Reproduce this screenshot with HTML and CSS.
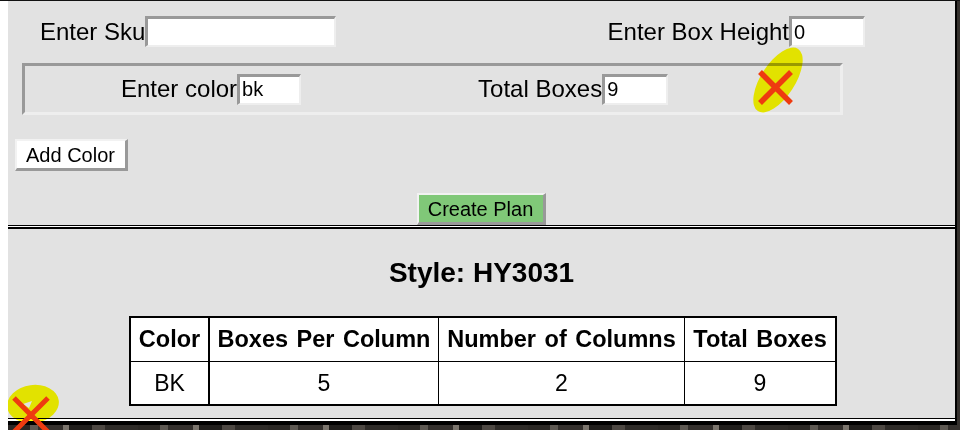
FILE: index.html
```html
<!DOCTYPE html>
<html>
<head>
<meta charset="utf-8">
<title>Plan</title>
<link rel="stylesheet" href="styles.css">
</head>
<body>
<div class="frame">
  <div class="panel">
    <section class="form">
      <div class="row-top">
        <label class="field"><span class="lbl">Enter Sku</span><input class="in in-sku" type="text" value=""></label>
        <label class="field"><span class="lbl">Enter Box Height</span><input class="in in-height" type="text" value="0"></label>
      </div>
      <div class="color-box">
        <label class="field"><span class="lbl">Enter color</span><input class="in in-color" type="text" value="bk"></label>
        <label class="field f-total"><span class="lbl">Total Boxes</span><input class="in in-total" type="text" value="9"></label>
        <div class="mark mark-row">
          <svg class="blob" width="56" height="69" viewBox="0 0 56 69"><ellipse cx="28" cy="35" rx="37" ry="17" transform="rotate(-57 28 35)" fill="#ffff00"/></svg>
          <svg class="cross" width="56" height="69" viewBox="0 0 56 69"><path d="M10 27 L41 58 M41 27 L10 58" stroke="#ee3b10" stroke-width="5.5" fill="none"/></svg>
        </div>
      </div>
      <button class="btn btn-add" type="button">Add Color</button>
      <div class="plan-wrap"><button class="btn btn-plan" type="button">Create Plan</button></div>
    </section>
    <div class="gap"></div>
    <section class="result">
      <h2 class="title">Style: HY3031</h2>
      <table class="plan">
        <thead>
          <tr><th>Color</th><th>Boxes Per Column</th><th>Number of Columns</th><th>Total Boxes</th></tr>
        </thead>
        <tbody>
          <tr><td>BK</td><td>5</td><td>2</td><td>9</td></tr>
        </tbody>
      </table>
    </section>
    <div class="foot"></div>
  </div>
  <div class="mark mark-corner">
    <svg class="blob" width="60" height="60" viewBox="0 0 60 60"><ellipse cx="29" cy="23" rx="26" ry="19" transform="rotate(-8 29 23)" fill="#ffff00"/><polygon points="19,23 28,20 25,27" fill="#ffffff"/></svg>
    <svg class="cross" width="60" height="60" viewBox="0 0 60 60"><path d="M10 17 L45 52 M44 17 L9 52" stroke="#ee3b10" stroke-width="5" fill="none"/></svg>
  </div>
</div>
</body>
</html>
```

FILE: styles.css
```css
html, body {
  margin: 0;
  padding: 0;
}

body {
  background: #fff;
  border-top: 1px solid #111;
  font-family: "Liberation Sans", Arial, sans-serif;
  color: #000;
}

.frame {
  position: relative;
  margin-left: 8px;
  width: 952px;
  height: 429px;
  overflow: hidden;
  background-color: #262422;
  background-image: repeating-linear-gradient(90deg,
    #2a2724 0 22px, #5e5953 22px 30px, #34302d 30px 55px,
    #7a746c 55px 61px, #1f1d1b 61px 84px, #4d4843 84px 97px,
    #2e2b28 97px 130px);
}

.panel {
  width: 949px;
  box-sizing: border-box;
  border-right: 2px solid #000;
  background: #e2e2e2;
}

/* ---------- form section ---------- */
.form {
  box-sizing: border-box;
  height: 225px;
  padding-top: 15px;
  border-bottom: 1px solid #000;
}

.row-top {
  display: flex;
  justify-content: space-between;
  align-items: center;
  height: 31px;
  padding: 0 90px 0 32px;
}

.field {
  display: flex;
  align-items: center;
}

.lbl {
  font-size: 24px;
  line-height: 28px;
  white-space: nowrap;
}

.in {
  box-sizing: border-box;
  height: 31px;
  margin: 0;
  padding: 0 2px;
  border-style: solid;
  border-width: 3px 2px 2px 3px;
  border-color: #999 #eee #eee #999;
  background: #fff;
  font-family: "Liberation Sans", Arial, sans-serif;
  font-size: 20px;
  color: #000;
  outline: none;
}

.in-sku { width: 191px; }
.in-height { width: 76px; }
.in-color { width: 64px; }
.in-total { width: 66px; }

.color-box {
  position: relative;
  box-sizing: border-box;
  display: flex;
  align-items: center;
  width: 821px;
  height: 52px;
  margin: 16px 0 0 14px;
  padding-left: 96px;
  border: 3px solid;
  border-color: #999 #eee #eee #999;
}

.f-total {
  margin-left: 177px;
}

.btn {
  display: block;
  box-sizing: border-box;
  height: 32px;
  margin: 0;
  padding: 0 10px 0 9px;
  border-style: solid;
  border-width: 2px 3px 3px 2px;
  border-color: #f2f2f2 #999 #999 #f2f2f2;
  background: #fff;
  font-family: "Liberation Sans", Arial, sans-serif;
  font-size: 20px;
  line-height: 26px;
  color: #000;
}

.btn-add {
  margin: 24px 0 0 7px;
}

.plan-wrap {
  display: flex;
  justify-content: center;
  margin-top: 22px;
}

.btn-plan {
  background: #80c878;
}

.gap {
  height: 1px;
  background: #fff;
}

/* ---------- result section ---------- */
.result {
  height: 189px;
  border-top: 2px solid #000;
  border-bottom: 1px solid #000;
}

.title {
  margin: 0;
  padding-top: 28px;
  font-size: 28px;
  line-height: 32px;
  font-weight: 700;
  text-align: center;
}

.plan {
  margin: 27px 0 0 121px;
  border-collapse: separate;
  border-spacing: 0;
  border: 2px solid #000;
  background: #fff;
}

.plan th {
  padding: 8px 0;
  font-size: 23.5px;
  line-height: 27px;
  font-weight: 700;
  word-spacing: 2px;
  text-align: center;
  border-bottom: 1px solid #000;
  white-space: nowrap;
}

.plan td {
  padding: 8px 0;
  font-size: 23px;
  line-height: 26px;
  text-align: center;
}

.plan th:nth-child(1), .plan td:nth-child(1) {
  width: 77px;
  border-right: 2px solid #000;
}

.plan th:nth-child(2), .plan td:nth-child(2) {
  width: 228px;
}

.plan th:nth-child(3), .plan td:nth-child(3) {
  width: 245px;
  border-left: 1px solid #000;
}

.plan th:nth-child(4), .plan td:nth-child(4) {
  width: 150px;
  border-left: 1px solid #000;
}

.foot {
  height: 2px;
  background: #fff;
  border-bottom: 4px solid #000;
}

/* ---------- annotation marks ---------- */
.mark {
  position: absolute;
}

.mark svg {
  position: absolute;
  left: 0;
  top: 0;
  display: block;
}

.mark .blob {
  mix-blend-mode: multiply;
}

.mark-row {
  left: 725px;
  top: -21px;
  width: 56px;
  height: 69px;
}

.mark-corner {
  left: -4px;
  top: 380px;
  width: 60px;
  height: 60px;
}
```
